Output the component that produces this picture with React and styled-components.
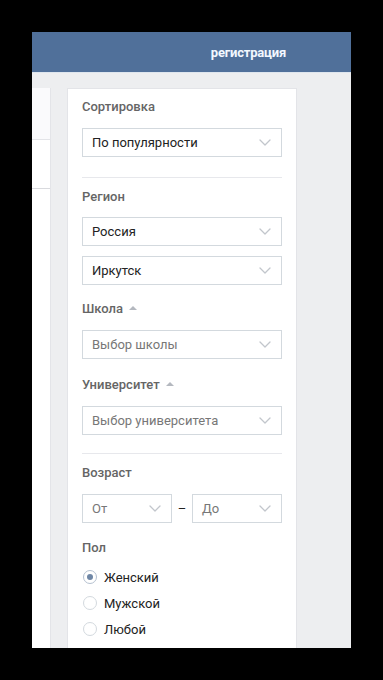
import React from "react";
import styled, { createGlobalStyle } from "styled-components";

const GlobalStyle = createGlobalStyle`
  html, body {
    margin: 0;
    padding: 0;
    background: #000;
    height: 680px;
    overflow: hidden;
  }
  body {
    font-family: Roboto, "Liberation Sans", Arial, sans-serif;
    font-size: 13px;
    -webkit-font-smoothing: antialiased;
  }
`;

const Chevron = () => (
  <svg width="12" height="7" viewBox="0 0 12 7" fill="none">
    <path d="M1 1l5 5 5-5" stroke="#c2c6cc" strokeWidth="1.3" strokeLinecap="round" strokeLinejoin="round" />
  </svg>
);

const Select = ({ value, placeholder, width }) => (
  <SelectBox $width={width}>
    <SelectText $placeholder={placeholder}>{value}</SelectText>
    <Chevron />
  </SelectBox>
);

const Radio = ({ label, checked }) => (
  <RadioRow>
    <RadioCircle $checked={checked} />
    <span>{label}</span>
  </RadioRow>
);

const App = () => {
  return (
    <>
      <GlobalStyle />
      <Window>
        <Header>
          <HeaderLink>регистрация</HeaderLink>
        </Header>
        <Body>
          <LeftCard>
            <LeftTop />
            <LeftRow />
          </LeftCard>
          <Panel>
            <Label>Сортировка</Label>
            <Field $top={13}>
              <Select value="По популярности" />
            </Field>
            <Divider $top={20} />

            <Label $top={11}>Регион</Label>
            <Field $top={12}>
              <Select value="Россия" />
            </Field>
            <Field $top={10}>
              <Select value="Иркутск" />
            </Field>

            <Label $top={16}>
              Школа <Caret />
            </Label>
            <Field $top={13}>
              <Select value="Выбор школы" placeholder />
            </Field>

            <Label $top={18}>
              Университет <Caret />
            </Label>
            <Field $top={13}>
              <Select value="Выбор университета" placeholder />
            </Field>
            <Divider $top={18} />

            <Label $top={11}>Возраст</Label>
            <AgeRow>
              <Select value="От" placeholder width="90px" />
              <Dash>–</Dash>
              <Select value="До" placeholder width="90px" />
            </AgeRow>

            <Label $top={17}>Пол</Label>
            <RadioList>
              <Radio label="Женский" checked />
              <Radio label="Мужской" />
              <Radio label="Любой" />
            </RadioList>
          </Panel>
        </Body>
      </Window>
    </>
  );
};

const Window = styled.div`
  margin: 32px 0 0 32px;
  width: 319px;
  height: 616px;
  background: #edeef0;
  overflow: hidden;
  display: flex;
  flex-direction: column;
`;

const Header = styled.div`
  height: 40px;
  flex-shrink: 0;
  background: #50709a;
  border-bottom: 1px solid #dfe6ee;
  display: flex;
  align-items: center;
  justify-content: flex-end;
  padding-right: 65px;
`;

const HeaderLink = styled.span`
  color: #f3f8ff;
  font-weight: 700;
  font-size: 13px;
  letter-spacing: -0.2px;
`;

const Body = styled.div`
  flex: 1;
  display: flex;
  align-items: flex-start;
  padding-top: 15px;
  gap: 16px;
`;

const LeftCard = styled.div`
  width: 18px;
  height: 600px;
  background: #fff;
  border-right: 1px solid #e3e4e8;
  flex-shrink: 0;
`;

const LeftTop = styled.div`
  height: 51px;
  background: #fafafc;
  border-bottom: 1px solid #e3e4e8;
`;

const LeftRow = styled.div`
  height: 48px;
  border-bottom: 1px solid #d9dade;
`;

const Panel = styled.div`
  width: 200px;
  height: 600px;
  flex-shrink: 0;
  background: #fff;
  border: 1px solid #e3e4e8;
  padding: 10px 14px 0;
  display: flex;
  flex-direction: column;
`;

const Label = styled.div`
  margin-top: ${(p) => p.$top || 0}px;
  height: 16px;
  line-height: 16px;
  font-size: 13px;
  font-weight: 500;
  color: #656565;
  display: flex;
  align-items: center;
  gap: 6px;
`;

const Caret = styled.span`
  width: 0;
  height: 0;
  border-left: 4px solid transparent;
  border-right: 4px solid transparent;
  border-bottom: 4px solid #b4b8bf;
  margin-top: -2px;
`;

const Field = styled.div`
  margin-top: ${(p) => p.$top || 0}px;
`;

const Divider = styled.div`
  margin-top: ${(p) => p.$top || 0}px;
  height: 1px;
  background: #e7e8ec;
`;

const SelectBox = styled.div`
  box-sizing: border-box;
  width: ${(p) => p.$width || "100%"};
  height: 29px;
  border: 1px solid #d3d9de;
  background: #fff;
  display: flex;
  align-items: center;
  justify-content: space-between;
  padding: 0 10px 0 9px;
`;

const SelectText = styled.span`
  font-size: 13px;
  color: ${(p) => (p.$placeholder ? "#777" : "#222")};
`;

const AgeRow = styled.div`
  margin-top: 13px;
  display: flex;
  align-items: center;
  justify-content: space-between;
`;

const Dash = styled.span`
  color: #222;
  font-size: 13px;
`;

const RadioList = styled.div`
  margin-top: 8px;
  display: flex;
  flex-direction: column;
`;

const RadioRow = styled.div`
  height: 26px;
  display: flex;
  align-items: center;
  gap: 7px;
  font-size: 13px;
  color: #222;
`;

const RadioCircle = styled.span`
  box-sizing: border-box;
  width: 14px;
  height: 14px;
  border-radius: 50%;
  border: 1px solid ${(p) => (p.$checked ? "#b5c1d0" : "#d3d9de")};
  display: flex;
  align-items: center;
  justify-content: center;
  margin-left: 1px;

  &::after {
    content: "";
    display: ${(p) => (p.$checked ? "block" : "none")};
    width: 6px;
    height: 6px;
    border-radius: 50%;
    background: #6f87a6;
  }
`;

export default App;
